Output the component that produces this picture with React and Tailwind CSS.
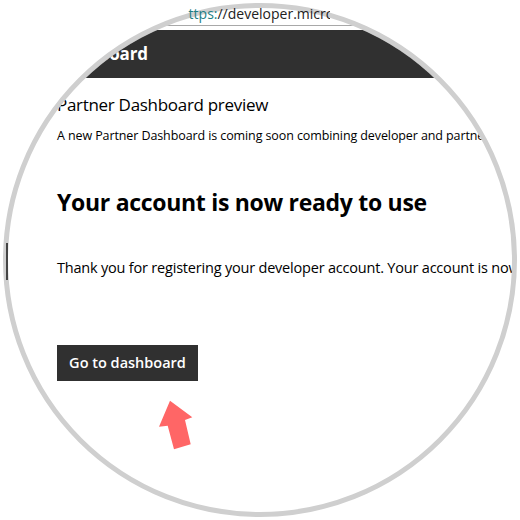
export default function App() {
  return (
    <div className="relative w-[520px] h-[520px] bg-white overflow-hidden" style={{ fontFamily: '"Open Sans", "Noto Sans", sans-serif' }}>
      <div className="absolute left-[3px] top-[3px] w-[514px] h-[514px] rounded-full border-[5px] border-[#cfcfcf] overflow-hidden bg-white">
        <div className="flex flex-col w-[504px]">
          <div className="h-[18px] border-b border-[#a8a8a8]"></div>
          <div className="h-[4px]"></div>
          <div className="h-[48px] bg-[#303030] flex items-center pl-[49px]">
            <span className="text-white font-bold text-[17px] tracking-[-0.2px]">Dashboard</span>
          </div>
          <div className="pl-[49px] pt-[15px] text-black whitespace-nowrap">
            <div className="text-[17px] leading-[24px] tracking-[-0.3px]">Partner Dashboard preview</div>
            <div className="text-[12.5px] leading-[16px] mt-[11px] tracking-[-0.1px]">
              A new Partner Dashboard is coming soon combining developer and partner center experiences.
            </div>
            <div className="text-[23px] leading-[32px] font-bold mt-[42px] tracking-[-0.3px]">Your account is now ready to use</div>
            <div className="text-[14.5px] leading-[20px] mt-[40px] tracking-[-0.2px]">
              Thank you for registering your developer account. Your account is now active.
            </div>
            <button className="mt-[67px] h-[36px] w-[141px] bg-[#303030] text-white text-[14.5px] font-semibold">
              Go to dashboard
            </button>
          </div>
        </div>
      </div>
      <div className="absolute left-[188px] top-[5px] w-[142px] overflow-hidden whitespace-nowrap text-[14px] leading-[18px]">
        <span className="ml-[-8px] text-[#1e7f86]">https:</span>
        <span className="text-[#222]">//developer.microsoft.com</span>
      </div>
      <div className="absolute left-[6px] top-[243px] w-[2px] h-[37px] bg-[#444]"></div>
      <svg className="absolute left-[155px] top-[397px]" width="42" height="56" viewBox="0 0 42 56">
        <polygon points="15,3.7 37.3,20.3 30,23 35.7,47.3 19,52.3 12.7,28.7 4,29.7" fill="#ff6666" />
      </svg>
    </div>
  );
}
